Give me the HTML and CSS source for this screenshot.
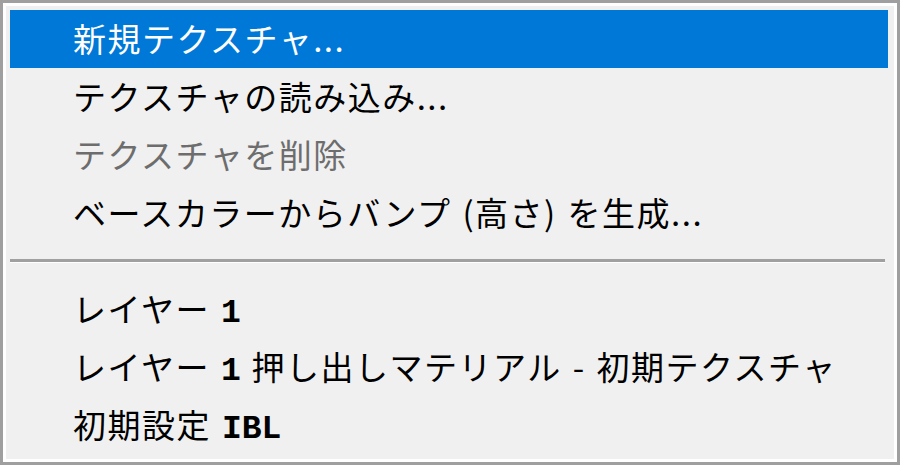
FILE: index.html
```html
<!DOCTYPE html>
<html lang="ja">
<head>
  <meta charset="UTF-8">
  <title>テクスチャメニュー</title>
  <link rel="stylesheet" href="styles.css">
</head>
<body>
  <div class="menu">
    <div class="item active">新規テクスチャ...</div>
    <div class="item">テクスチャの読み込み...</div>
    <div class="item disabled">テクスチャを削除</div>
    <div class="item">ベースカラーからバンプ (高さ) を生成...</div>
    <div class="sep"></div>
    <div class="item">レイヤー <span class="latin">1</span></div>
    <div class="item">レイヤー <span class="latin">1</span> 押し出しマテリアル - 初期テクスチャ</div>
    <div class="item">初期設定 <span class="latin">IBL</span></div>
  </div>
</body>
</html>
```

FILE: styles.css
```css
/* Reset */
* { box-sizing: border-box; margin: 0; padding: 0; }
body { background: #f0f0f0; font-family: "Noto Sans CJK JP", "Noto Sans", sans-serif; }

/* Menú contextual */
.menu {
  width: 900px;
  height: 465px;
  border: 3px solid #9f9f9f;
  background: #f0f0f0;
  box-shadow: inset 0 0 0 3px #fff;
  padding: 7px 9px 3px 7px;
}
.item {
  height: 58px;
  line-height: 56px;
  padding-left: 63px;
  font-size: 33px;
  letter-spacing: 1.5px;
  word-spacing: 2px;
  color: #000;
  white-space: nowrap;
}
.item.active { background: #0078d7; color: #fff; }
.item.disabled { color: #6d6d6d; }
.latin { font-family: "Liberation Mono", monospace; font-weight: bold; letter-spacing: 0; }

/* Separador */
.sep { height: 38px; display: flex; align-items: center; padding-right: 3px; }
.sep::before { content: ""; display: block; width: 100%; height: 3px; background: #a0a0a0; border-bottom: 1px solid #fff; }
```
